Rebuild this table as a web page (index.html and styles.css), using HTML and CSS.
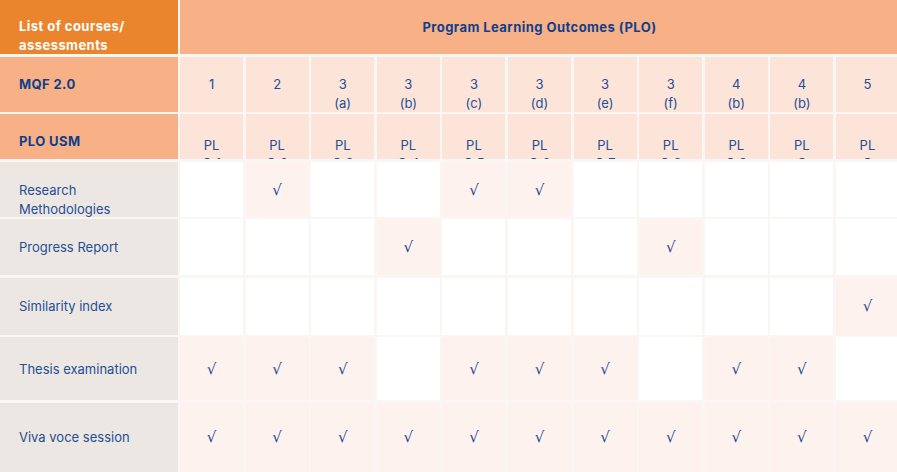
FILE: index.html
```html
<!DOCTYPE html>
<html lang="en">
<head>
<meta charset="utf-8">
<title>Program Learning Outcomes</title>
<link rel="stylesheet" href="styles.css">
</head>
<body>
<div class="matrix">
  <div class="cell corner">List of courses/ assessments</div>
  <div class="cell plo-title">Program Learning Outcomes (PLO)</div>

  <div class="cell row-label">MQF 2.0</div>
  <div class="cell num">1</div>
  <div class="cell num">2</div>
  <div class="cell num">3<br>(a)</div>
  <div class="cell num">3<br>(b)</div>
  <div class="cell num">3<br>(c)</div>
  <div class="cell num">3<br>(d)</div>
  <div class="cell num">3<br>(e)</div>
  <div class="cell num">3<br>(f)</div>
  <div class="cell num">4<br>(b)</div>
  <div class="cell num">4<br>(b)</div>
  <div class="cell num">5</div>

  <div class="cell row-label short">PLO USM</div>
  <div class="cell num short plo">PL<wbr>O 1</div>
  <div class="cell num short plo">PL<wbr>O 2</div>
  <div class="cell num short plo">PL<wbr>O 3</div>
  <div class="cell num short plo">PL<wbr>O 4</div>
  <div class="cell num short plo">PL<wbr>O 5</div>
  <div class="cell num short plo">PL<wbr>O 6</div>
  <div class="cell num short plo">PL<wbr>O 7</div>
  <div class="cell num short plo">PL<wbr>O 8</div>
  <div class="cell num short plo">PL<wbr>O 9</div>
  <div class="cell num short plo">PL<wbr>O 10</div>
  <div class="cell num short plo">PL<wbr>O 11</div>

  <div class="cell course">Research Methodologies</div>
  <div class="cell"></div>
  <div class="cell on">√</div>
  <div class="cell"></div>
  <div class="cell"></div>
  <div class="cell on">√</div>
  <div class="cell on">√</div>
  <div class="cell"></div>
  <div class="cell"></div>
  <div class="cell"></div>
  <div class="cell"></div>
  <div class="cell"></div>

  <div class="cell course">Progress Report</div>
  <div class="cell"></div>
  <div class="cell"></div>
  <div class="cell"></div>
  <div class="cell on">√</div>
  <div class="cell"></div>
  <div class="cell"></div>
  <div class="cell"></div>
  <div class="cell on">√</div>
  <div class="cell"></div>
  <div class="cell"></div>
  <div class="cell"></div>

  <div class="cell course">Similarity index</div>
  <div class="cell"></div>
  <div class="cell"></div>
  <div class="cell"></div>
  <div class="cell"></div>
  <div class="cell"></div>
  <div class="cell"></div>
  <div class="cell"></div>
  <div class="cell"></div>
  <div class="cell"></div>
  <div class="cell"></div>
  <div class="cell on">√</div>

  <div class="cell course tall">Thesis examination</div>
  <div class="cell tall on">√</div>
  <div class="cell tall on">√</div>
  <div class="cell tall on">√</div>
  <div class="cell tall"></div>
  <div class="cell tall on">√</div>
  <div class="cell tall on">√</div>
  <div class="cell tall on">√</div>
  <div class="cell tall"></div>
  <div class="cell tall on">√</div>
  <div class="cell tall on">√</div>
  <div class="cell tall"></div>

  <div class="cell course taller">Viva voce session</div>
  <div class="cell taller on">√</div>
  <div class="cell taller on">√</div>
  <div class="cell taller on">√</div>
  <div class="cell taller on">√</div>
  <div class="cell taller on">√</div>
  <div class="cell taller on">√</div>
  <div class="cell taller on">√</div>
  <div class="cell taller on">√</div>
  <div class="cell taller on">√</div>
  <div class="cell taller on">√</div>
  <div class="cell taller on">√</div>
</div>
</body>
</html>
```

FILE: styles.css
```css
html, body {
  margin: 0;
  padding: 0;
  background: #ffffff;
  overflow: hidden;
}

body {
  font-family: Inter, "Noto Sans", "Liberation Sans", sans-serif;
  font-size: 13px;
  color: #244f95;
}

.matrix {
  display: grid;
  grid-template-columns: 177.5px repeat(11, 1fr);
  grid-template-rows: 54px 55px 45px 55px 56px 57px 63px 70px;
  gap: 2.5px;
  width: 899px;
  background: #faf6f3;
}

.cell {
  background: #ffffff;
  padding-top: 19px;
  line-height: 19px;
  text-align: center;
  overflow: hidden;
}

.cell.on {
  background: #fdf2ed;
  font-family: "DejaVu Sans", sans-serif;
  font-size: 15px;
  color: #1f4b93;
}

.cell.tall {
  padding-top: 23px;
}

.cell.taller {
  padding-top: 25px;
}

.corner {
  background: #eb852d;
  color: #ffffff;
  font-weight: 700;
  letter-spacing: 0.45px;
  text-align: left;
  padding: 17px 19px 0;
  line-height: 18.5px;
}

.plo-title {
  grid-column: span 11;
  background: #f8b087;
  color: #0e3f8b;
  font-weight: 700;
  letter-spacing: 0.45px;
  padding-top: 17px;
  line-height: 20px;
}

.row-label {
  background: #f8b087;
  color: #0e3f8b;
  font-weight: 700;
  letter-spacing: 0.4px;
  text-align: left;
  padding-left: 19px;
  padding-top: 18px;
}

.num {
  background: #fde4d9;
  padding-top: 18px;
}

.plo {
  padding-left: 20px;
  padding-right: 20px;
  line-height: 18px;
  padding-top: 22px;
}

.course {
  background: #ede7e3;
  text-align: left;
  padding-left: 19px;
  padding-right: 19px;
  line-height: 19px;
}
```
